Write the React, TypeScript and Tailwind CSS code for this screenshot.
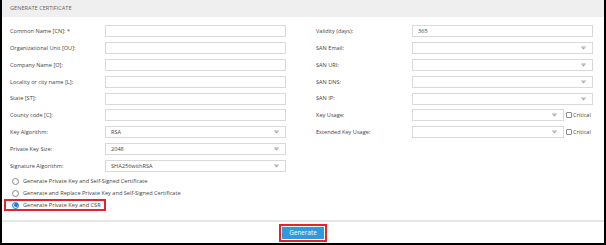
import { useState } from 'react';

const leftFields = [
    { label: 'Common Name [CN]: *', value: '', select: false },
    { label: 'Organizational Unit [OU]:', value: '', select: false },
    { label: 'Company Name [O]:', value: '', select: false },
    { label: 'Locality or city name [L]:', value: '', select: false },
    { label: 'State [ST]:', value: '', select: false },
    { label: 'County code [C]:', value: '', select: false },
    { label: 'Key Algorithm:', value: 'RSA', select: true },
    { label: 'Private Key Size:', value: '2048', select: true },
    { label: 'Signature Algorithm:', value: 'SHA256withRSA', select: true },
];

const rightFields = [
    { label: 'Validity (days):', value: '365', select: false, critical: false },
    { label: 'SAN Email:', value: '', select: true, critical: false },
    { label: 'SAN URI:', value: '', select: true, critical: false },
    { label: 'SAN DNS:', value: '', select: true, critical: false },
    { label: 'SAN IP:', value: '', select: true, critical: false },
    { label: 'Key Usage:', value: '', select: true, critical: true },
    { label: 'Extended Key Usage:', value: '', select: true, critical: true },
];

const options = [
    'Generate Private Key and Self-Signed Certificate',
    'Generate and Replace Private Key and Self-Signed Certificate',
    'Generate Private Key and CSR',
];

function Field({ value, select, width }: { value: string; select: boolean; width: string }) {
    return (
        <div className={`${width} h-[12px] border border-[#d9d9d9] bg-white flex items-center justify-between pl-[5px] pr-[6px]`}>
            <span className="text-[#444]">{value}</span>
            {select && (
                <svg width="5" height="4" viewBox="0 0 5 4" className="block">
                    <rect x="0" y="0.5" width="5" height="0.8" fill="#b0b0b0" />
                    <path d="M0.5 1.6 L4.5 1.6 L2.5 3.6 Z" fill="#a0a0a0" />
                </svg>
            )}
        </div>
    );
}

function Radio({ checked }: { checked: boolean }) {
    return (
        <span
            className={`w-[7px] h-[7px] rounded-full border flex items-center justify-center bg-white ${
                checked ? 'border-[#1a73d9]' : 'border-[#8a8a8a]'
            }`}
        >
            {checked && <span className="w-[4px] h-[4px] rounded-full bg-[#1a73d9]" />}
        </span>
    );
}

export default function App() {
    const [selected] = useState(2);

    return (
        <div className="w-[606px] h-[245px] bg-white border-l-2 border-r-2 border-b-2 border-black flex flex-col font-['Open_Sans',sans-serif] text-[5.6px] text-[#444] overflow-hidden">
            {/* Header */}
            <div className="h-[17px] bg-[#efefef] flex items-center pl-[8px] text-[#666] uppercase">
                Generate Certificate
            </div>

            {/* Form */}
            <div className="flex pt-[6px] pl-[8px]">
                <div className="flex flex-col w-[306px]">
                    {leftFields.map((f) => (
                        <div key={f.label} className="h-[16.8px] flex items-center">
                            <span className="w-[95px]">{f.label}</span>
                            <Field value={f.value} select={f.select} width="w-[181px]" />
                        </div>
                    ))}
                </div>
                <div className="flex flex-col">
                    {rightFields.map((f) => (
                        <div key={f.label} className="h-[16.8px] flex items-center">
                            <span className="w-[96px]">{f.label}</span>
                            {f.critical ? (
                                <div className="flex items-center">
                                    <Field value={f.value} select={f.select} width="w-[152px]" />
                                    <span className="ml-[2px] w-[6px] h-[6px] border border-[#8a8a8a] rounded-[1px]" />
                                    <span className="ml-[1px]">Critical</span>
                                </div>
                            ) : (
                                <Field value={f.value} select={f.select} width="w-[181px]" />
                            )}
                        </div>
                    ))}
                </div>
            </div>

            {/* Options */}
            <div className="flex flex-col pt-[1px] pl-[2px]">
                {options.map((o, i) => (
                    <div key={o} className="h-[12px] flex items-center">
                        <div
                            className={`flex items-center gap-[4px] h-[12px] pl-[6px] pr-[3px] border-2 ${
                                i === selected ? 'border-[#e3242b]' : 'border-transparent'
                            }`}
                        >
                            <Radio checked={i === selected} />
                            <span>{o}</span>
                        </div>
                    </div>
                ))}
            </div>

            <div className="flex-1" />

            {/* Footer */}
            <div className="h-[2px] bg-[#e6e6e6]" />
            <div className="h-[21px] flex items-center justify-center">
                <div className="border-2 border-[#e3242b] p-[1px]">
                    <button className="h-[12px] px-[7px] bg-[#2f9ae0] text-white text-[6.3px] flex items-center">
                        Generate
                    </button>
                </div>
            </div>
        </div>
    );
}
